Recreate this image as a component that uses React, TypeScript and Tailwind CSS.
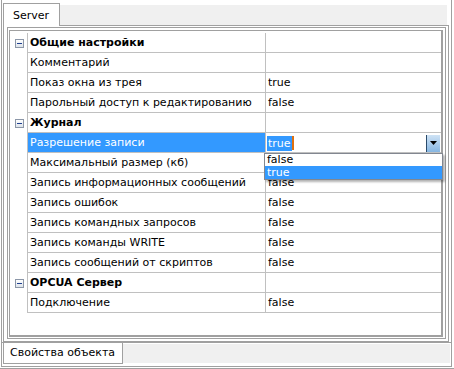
import React from 'react';

type Row = { name: string; value?: string; cat?: boolean; selected?: boolean };

const rows: Row[] = [
  { cat: true, name: 'Общие настройки' },
  { name: 'Комментарий', value: '' },
  { name: 'Показ окна из трея', value: 'true' },
  { name: 'Парольный доступ к редактированию', value: 'false' },
  { cat: true, name: 'Журнал' },
  { name: 'Разрешение записи', value: 'true', selected: true },
  { name: 'Максимальный размер (кб)', value: '' },
  { name: 'Запись информационных сообщений', value: 'false' },
  { name: 'Запись ошибок', value: 'false' },
  { name: 'Запись командных запросов', value: 'false' },
  { name: 'Запись команды WRITE', value: 'false' },
  { name: 'Запись сообщений от скриптов', value: 'false' },
  { cat: true, name: 'OPCUA Сервер' },
  { name: 'Подключение', value: 'false' },
];

function MinusBox() {
  return (
    <div className="w-[9px] h-[9px] border border-[#8c97a8] bg-gradient-to-b from-white to-[#dde3ea] flex items-center justify-center">
      <div className="w-[5px] h-[1px] bg-[#1f3f8f]" />
    </div>
  );
}

export default function App() {
  return (
    <div
      className="relative w-[454px] h-[369px] bg-white border-b border-[#a0a0a0] text-[11px] text-black"
      style={{ fontFamily: '"DejaVu Sans", Verdana, sans-serif' }}
    >
      <div className="ml-[1px] w-[451px] h-[367px] border-l border-r border-b border-[#a0a0a0] flex flex-col">
        {/* top tab control */}
        <div className="h-[342px] pl-[1px] flex flex-col">
          <div className="h-[25px] flex items-end">
            <div className="relative z-10 -mb-[1px] w-[57px] h-[23px] border-t border-l border-r border-[#a0a0a0] bg-white pl-[9px] pt-[4px] leading-[15px]">
              Server
            </div>
            <div className="w-[387px] h-[20px] bg-[#f0f0f0]" />
          </div>
          <div className="w-[446px] h-[317px] border border-[#a0a0a0] pl-[3px] pt-[1px]">
            <div className="w-[439px] h-[312px] border border-[#a0a0a0] pl-[1px] pt-[2px]">
              <div className="relative w-[434px] h-[307px] border-l border-t border-r-2 border-b-2 border-[#a0a0a0] pt-[2px]">
                {rows.map((r, i) => (
                  <div key={i} className="flex h-[20px]">
                    <div className="w-[17px] flex items-center pl-[5px]">
                      {r.cat ? <MinusBox /> : null}
                    </div>
                    <div
                      className={
                        'w-[238px] border-l border-b border-[#c0c0c0] pl-[2px] pt-[1px] flex items-center whitespace-nowrap overflow-hidden ' +
                        (r.cat ? 'font-bold ' : '') +
                        (r.selected ? 'bg-[#3399ff] text-white' : '')
                      }
                    >
                      {r.name}
                    </div>
                    <div className="w-[176px] border-l border-b border-[#c0c0c0] flex items-center relative pt-[1px]">
                      {r.selected ? (
                        <div className="flex-1 h-[19px] flex items-center">
                          <span className="ml-[1px] bg-[#3399ff] text-white px-[1px] leading-[15px]">true</span>
                          <span className="w-[2px] h-[14px] bg-[#e0700f]" />
                          <div className="ml-auto mr-[1px] w-[14px] h-[17px] border-l border-[#2a4a6b] bg-gradient-to-b from-[#cfe3f5] to-[#86b6e2] flex items-center justify-center">
                            <svg width="7" height="4" viewBox="0 0 7 4">
                              <path d="M0 0H7L3.5 4Z" fill="#000" />
                            </svg>
                          </div>
                        </div>
                      ) : (
                        <span className="pl-[2px]">{r.value}</span>
                      )}
                    </div>
                  </div>
                ))}
                {/* dropdown list */}
                <div className="absolute left-[254px] top-[122px] w-[179px] h-[27px] border border-[#828790] bg-white shadow-[2px_2px_2px_rgba(0,0,0,0.3)] z-20">
                  <div className="h-[12px] pl-[2px] leading-[12px]">false</div>
                  <div className="h-[13px] pl-[2px] leading-[13px] bg-[#3399ff] text-white">true</div>
                </div>
              </div>
            </div>
          </div>
        </div>
        {/* bottom tab control */}
        <div className="h-[24px] border-t border-[#a0a0a0] pl-[1px] flex items-start">
          <div className="w-[120px] h-[21px] border-l border-r border-b border-[#a0a0a0] bg-white pl-[6px] pt-[3px] leading-[14px]">
            Свойства объекта
          </div>
          <div className="mt-[1px] w-[327px] h-[19px] bg-[#f0f0f0]" />
        </div>
      </div>
    </div>
  );
}
